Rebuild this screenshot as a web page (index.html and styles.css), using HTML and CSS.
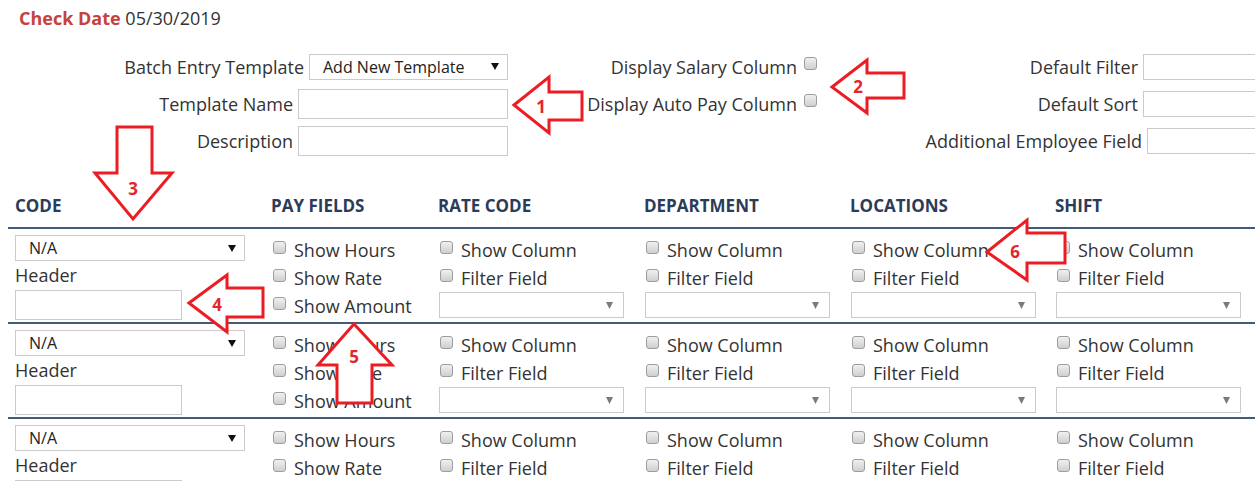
FILE: index.html
```html
<!DOCTYPE html>
<html lang="en">
<head>
<meta charset="utf-8">
<title>Batch Entry Template</title>
<link rel="stylesheet" href="styles.css">
</head>
<body>
<div class="page">
  <div class="check-date"><span class="check-date-label">Check Date</span> 05/30/2019</div>

  <div class="settings">
    <div class="settings-col col-template">
      <div class="field">
        <span>Batch Entry Template</span>
        <div class="dropdown dropdown-template"><span>Add New Template</span><svg class="caret" width="8" height="7" viewBox="0 0 8 7"><path d="M0 0H8L4 7Z"/></svg></div>
      </div>
      <div class="field">
        <span>Template Name</span>
        <input class="text-input" type="text">
      </div>
      <div class="field">
        <span>Description</span>
        <input class="text-input" type="text">
      </div>
    </div>

    <div class="settings-col col-display">
      <div class="field field-check">
        <span>Display Salary Column</span>
        <input class="box" type="checkbox">
      </div>
      <div class="field field-check">
        <span>Display Auto Pay Column</span>
        <input class="box" type="checkbox">
      </div>
    </div>

    <div class="settings-col col-defaults">
      <div class="field">
        <span>Default Filter</span>
        <input class="text-input text-input-sm" type="text">
      </div>
      <div class="field">
        <span>Default Sort</span>
        <input class="text-input text-input-sm" type="text">
      </div>
      <div class="field">
        <span>Additional Employee Field</span>
        <input class="text-input text-input-sm text-input-narrow" type="text">
      </div>
    </div>
  </div>

  <div class="grid">
    <div class="grid-head">
      <div>CODE</div>
      <div>PAY FIELDS</div>
      <div>RATE CODE</div>
      <div>DEPARTMENT</div>
      <div>LOCATIONS</div>
      <div>SHIFT</div>
    </div>

    <div class="grid-row">
      <div class="cell cell-code">
        <div class="dropdown dropdown-code"><span>N/A</span><svg class="caret" width="8" height="7" viewBox="0 0 8 7"><path d="M0 0H8L4 7Z"/></svg></div>
        <div class="row-label">Header</div>
        <input class="text-input header-input" type="text">
      </div>
      <div class="cell">
        <label class="check"><input class="box" type="checkbox">Show Hours</label>
        <label class="check"><input class="box" type="checkbox">Show Rate</label>
        <label class="check"><input class="box" type="checkbox">Show Amount</label>
      </div>
      <div class="cell">
        <label class="check"><input class="box" type="checkbox">Show Column</label>
        <label class="check"><input class="box" type="checkbox">Filter Field</label>
        <div class="dropdown dropdown-filter"><span></span><svg class="caret caret-muted" width="7" height="7" viewBox="0 0 7 7"><path d="M0 0H7L3.5 7Z"/></svg></div>
      </div>
      <div class="cell">
        <label class="check"><input class="box" type="checkbox">Show Column</label>
        <label class="check"><input class="box" type="checkbox">Filter Field</label>
        <div class="dropdown dropdown-filter"><span></span><svg class="caret caret-muted" width="7" height="7" viewBox="0 0 7 7"><path d="M0 0H7L3.5 7Z"/></svg></div>
      </div>
      <div class="cell">
        <label class="check"><input class="box" type="checkbox">Show Column</label>
        <label class="check"><input class="box" type="checkbox">Filter Field</label>
        <div class="dropdown dropdown-filter"><span></span><svg class="caret caret-muted" width="7" height="7" viewBox="0 0 7 7"><path d="M0 0H7L3.5 7Z"/></svg></div>
      </div>
      <div class="cell">
        <label class="check"><input class="box" type="checkbox">Show Column</label>
        <label class="check"><input class="box" type="checkbox">Filter Field</label>
        <div class="dropdown dropdown-filter"><span></span><svg class="caret caret-muted" width="7" height="7" viewBox="0 0 7 7"><path d="M0 0H7L3.5 7Z"/></svg></div>
      </div>
    </div>

    <div class="grid-row">
      <div class="cell cell-code">
        <div class="dropdown dropdown-code"><span>N/A</span><svg class="caret" width="8" height="7" viewBox="0 0 8 7"><path d="M0 0H8L4 7Z"/></svg></div>
        <div class="row-label">Header</div>
        <input class="text-input header-input" type="text">
      </div>
      <div class="cell">
        <label class="check"><input class="box" type="checkbox">Show Hours</label>
        <label class="check"><input class="box" type="checkbox">Show Rate</label>
        <label class="check"><input class="box" type="checkbox">Show Amount</label>
      </div>
      <div class="cell">
        <label class="check"><input class="box" type="checkbox">Show Column</label>
        <label class="check"><input class="box" type="checkbox">Filter Field</label>
        <div class="dropdown dropdown-filter"><span></span><svg class="caret caret-muted" width="7" height="7" viewBox="0 0 7 7"><path d="M0 0H7L3.5 7Z"/></svg></div>
      </div>
      <div class="cell">
        <label class="check"><input class="box" type="checkbox">Show Column</label>
        <label class="check"><input class="box" type="checkbox">Filter Field</label>
        <div class="dropdown dropdown-filter"><span></span><svg class="caret caret-muted" width="7" height="7" viewBox="0 0 7 7"><path d="M0 0H7L3.5 7Z"/></svg></div>
      </div>
      <div class="cell">
        <label class="check"><input class="box" type="checkbox">Show Column</label>
        <label class="check"><input class="box" type="checkbox">Filter Field</label>
        <div class="dropdown dropdown-filter"><span></span><svg class="caret caret-muted" width="7" height="7" viewBox="0 0 7 7"><path d="M0 0H7L3.5 7Z"/></svg></div>
      </div>
      <div class="cell">
        <label class="check"><input class="box" type="checkbox">Show Column</label>
        <label class="check"><input class="box" type="checkbox">Filter Field</label>
        <div class="dropdown dropdown-filter"><span></span><svg class="caret caret-muted" width="7" height="7" viewBox="0 0 7 7"><path d="M0 0H7L3.5 7Z"/></svg></div>
      </div>
    </div>

    <div class="grid-row">
      <div class="cell cell-code">
        <div class="dropdown dropdown-code"><span>N/A</span><svg class="caret" width="8" height="7" viewBox="0 0 8 7"><path d="M0 0H8L4 7Z"/></svg></div>
        <div class="row-label">Header</div>
        <input class="text-input header-input" type="text">
      </div>
      <div class="cell">
        <label class="check"><input class="box" type="checkbox">Show Hours</label>
        <label class="check"><input class="box" type="checkbox">Show Rate</label>
        <label class="check"><input class="box" type="checkbox">Show Amount</label>
      </div>
      <div class="cell">
        <label class="check"><input class="box" type="checkbox">Show Column</label>
        <label class="check"><input class="box" type="checkbox">Filter Field</label>
        <div class="dropdown dropdown-filter"><span></span><svg class="caret caret-muted" width="7" height="7" viewBox="0 0 7 7"><path d="M0 0H7L3.5 7Z"/></svg></div>
      </div>
      <div class="cell">
        <label class="check"><input class="box" type="checkbox">Show Column</label>
        <label class="check"><input class="box" type="checkbox">Filter Field</label>
        <div class="dropdown dropdown-filter"><span></span><svg class="caret caret-muted" width="7" height="7" viewBox="0 0 7 7"><path d="M0 0H7L3.5 7Z"/></svg></div>
      </div>
      <div class="cell">
        <label class="check"><input class="box" type="checkbox">Show Column</label>
        <label class="check"><input class="box" type="checkbox">Filter Field</label>
        <div class="dropdown dropdown-filter"><span></span><svg class="caret caret-muted" width="7" height="7" viewBox="0 0 7 7"><path d="M0 0H7L3.5 7Z"/></svg></div>
      </div>
      <div class="cell">
        <label class="check"><input class="box" type="checkbox">Show Column</label>
        <label class="check"><input class="box" type="checkbox">Filter Field</label>
        <div class="dropdown dropdown-filter"><span></span><svg class="caret caret-muted" width="7" height="7" viewBox="0 0 7 7"><path d="M0 0H7L3.5 7Z"/></svg></div>
      </div>
    </div>
  </div>
</div>

<!-- numbered callout arrows drawn over the form -->
<svg class="callouts" width="1255" height="481" viewBox="0 0 1255 481">
  <g class="arrow">
    <polygon points="514,105 549,77 549,92 582,92 582,120 549,120 549,133"/>
    <polygon points="832,87 867,60 867,73 904,73 904,98 867,98 867,113"/>
    <polygon points="117,127 152,127 152,173 172,173 133,219 95,173 117,173"/>
    <polygon points="189,303 227,275 227,288 263,288 263,317 227,317 227,332"/>
    <polygon points="354,324 392,365 372,365 372,403 337,403 337,365 318,365"/>
    <polygon points="987,252 1027,220 1027,233 1065,233 1065,263 1027,263 1027,280"/>
  </g>
  <g class="arrow-num">
    <text x="541" y="113">1</text>
    <text x="858" y="93">2</text>
    <text x="133" y="195">3</text>
    <text x="217" y="311">4</text>
    <text x="354" y="363">5</text>
    <text x="1015" y="258">6</text>
  </g>
</svg>
</body>
</html>
```

FILE: styles.css
```css
* {
  box-sizing: border-box;
}

html,
body {
  margin: 0;
}

body {
  position: relative;
  width: 1255px;
  height: 481px;
  overflow: hidden;
  background: #fff;
  color: #333;
  font-family: "Open Sans", "Liberation Sans", sans-serif;
}

.page {
  padding: 0 8px;
}

/* page title */
.check-date {
  padding: 6px 0 0 11px;
  font-size: 18px;
  line-height: 24px;
}

.check-date-label {
  color: #c6423d;
  font-weight: 700;
}

/* template settings */
.settings {
  display: flex;
  margin-top: 18px;
}

.settings-col {
  flex: none;
  display: flex;
  flex-direction: column;
}

.col-template {
  width: 500px;
}

.col-display {
  width: 310px;
}

.col-defaults {
  width: 531px;
}

.field {
  height: 37px;
  display: flex;
  align-items: center;
  justify-content: flex-end;
  gap: 5px;
  font-size: 18px;
  white-space: nowrap;
}

.field-check {
  gap: 7px;
  padding-right: 1px;
}

.field-check .box {
  margin-bottom: 6px;
}

.text-input {
  width: 210px;
  height: 30px;
  margin: 0;
  padding: 0 6px;
  border: 1px solid #cbcbcb;
  border-radius: 0;
  background: #fff;
  font: inherit;
}

.text-input-sm {
  width: 206px;
  height: 26px;
}

.text-input-narrow {
  width: 202px;
}

/* select boxes */
.dropdown {
  flex: none;
  display: flex;
  align-items: center;
  justify-content: space-between;
  height: 26px;
  padding: 0 8px 0 13px;
  border: 1px solid #cbcbcb;
  background: #fff;
  color: #222;
  font-size: 16px;
}

.dropdown-template {
  width: 199px;
}

.dropdown-code {
  width: 230px;
}

.dropdown-filter {
  width: 185px;
  padding-right: 10px;
}

.caret {
  flex: none;
  fill: #111;
}

.caret-muted {
  fill: #7a7a7a;
}

/* checkboxes */
.box {
  -webkit-appearance: none;
  appearance: none;
  flex: none;
  width: 13px;
  height: 13px;
  margin: 0;
  border: 1px solid #9d9d9d;
  border-radius: 3px;
  background: linear-gradient(#f0f0f0, #cfcfcf);
}

/* code grid */
.grid {
  width: 1247px;
  margin-top: 35px;
}

.grid-head,
.grid-row {
  display: grid;
  grid-template-columns: 256px 167px 206px 206px 205px 207px;
  border-bottom: 2px solid #45597a;
}

.grid-head > div {
  padding: 0 0 9px 7px;
  color: #2a3c5a;
  font-size: 17px;
  font-weight: 700;
  line-height: 24px;
}

.cell {
  padding: 7px 0 2px 8px;
}

.cell-code {
  padding: 6px 0 2px 7px;
}

.row-label {
  font-size: 18px;
  line-height: 29px;
}

.header-input {
  display: block;
  width: 167px;
}

.check {
  display: flex;
  align-items: center;
  gap: 8px;
  height: 28px;
  font-size: 18px;
  white-space: nowrap;
}

.check .box {
  margin: 0 0 5px 1px;
}

/* callouts */
.callouts {
  position: absolute;
  top: 0;
  left: 0;
  pointer-events: none;
}

.arrow polygon {
  fill: #fff;
  stroke: #ec1c24;
  stroke-width: 3;
  stroke-linejoin: miter;
}

.arrow-num text {
  fill: #e3262d;
  font-family: "Open Sans", "Liberation Sans", sans-serif;
  font-size: 17px;
  font-weight: 700;
  text-anchor: middle;
}
```
